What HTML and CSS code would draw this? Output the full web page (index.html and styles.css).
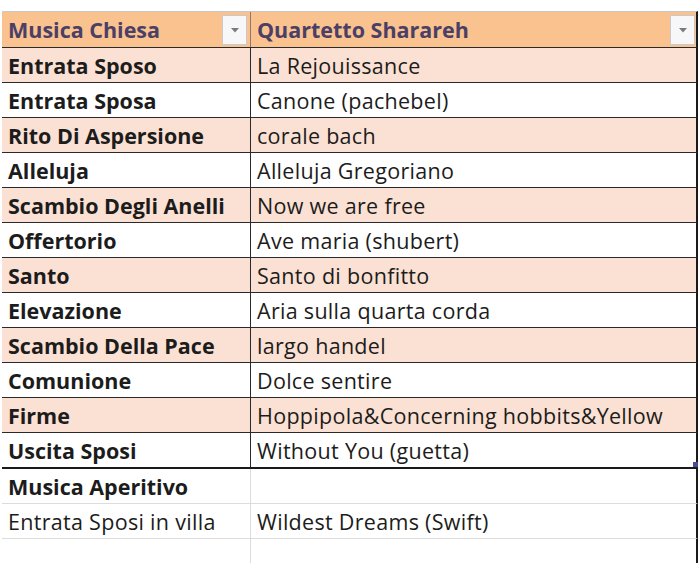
FILE: index.html
```html
<!DOCTYPE html>
<html>
<head>
<meta charset="utf-8">
<link rel="stylesheet" href="styles.css">
</head>
<body>
<div class="sheet">
  <div class="row head">
    <div class="cell c1"><span class="txt">Musica Chiesa</span><span class="dd"><svg width="10" height="6" viewBox="0 0 10 6"><path d="M1 1h8L5 5.5z" fill="#7a7a7a"/></svg></span></div>
    <div class="cell c2"><span class="txt">Quartetto Sharareh</span><span class="dd"><svg width="10" height="6" viewBox="0 0 10 6"><path d="M1 1h8L5 5.5z" fill="#7a7a7a"/></svg></span></div>
  </div>
  <div class="row odd"><div class="cell c1 b">Entrata Sposo</div><div class="cell c2">La Rejouissance</div></div>
  <div class="row even"><div class="cell c1 b">Entrata Sposa</div><div class="cell c2">Canone (pachebel)</div></div>
  <div class="row odd"><div class="cell c1 b">Rito Di Aspersione</div><div class="cell c2">corale bach</div></div>
  <div class="row even"><div class="cell c1 b">Alleluja</div><div class="cell c2">Alleluja Gregoriano</div></div>
  <div class="row odd"><div class="cell c1 b">Scambio Degli Anelli</div><div class="cell c2">Now we are free</div></div>
  <div class="row even"><div class="cell c1 b">Offertorio</div><div class="cell c2">Ave maria (shubert)</div></div>
  <div class="row odd"><div class="cell c1 b">Santo</div><div class="cell c2">Santo di bonfitto</div></div>
  <div class="row even"><div class="cell c1 b">Elevazione</div><div class="cell c2">Aria sulla quarta corda</div></div>
  <div class="row odd"><div class="cell c1 b">Scambio Della Pace</div><div class="cell c2">largo handel</div></div>
  <div class="row even"><div class="cell c1 b">Comunione</div><div class="cell c2">Dolce sentire</div></div>
  <div class="row odd"><div class="cell c1 b">Firme</div><div class="cell c2">Hoppipola&amp;Concerning hobbits&amp;Yellow</div></div>
  <div class="row even last"><div class="cell c1 b">Uscita Sposi</div><div class="cell c2">Without You (guetta)<span class="handle"></span></div></div>
  <div class="row plain"><div class="cell c1 b">Musica Aperitivo</div><div class="cell c2"></div></div>
  <div class="row plain"><div class="cell c1">Entrata Sposi in villa</div><div class="cell c2">Wildest Dreams (Swift)</div></div>
  <div class="row plain"><div class="cell c1"></div><div class="cell c2"></div></div>
</div>
</body>
</html>
```
FILE: styles.css
```css
html, body {
  margin: 0;
  padding: 0;
  background: #ffffff;
  overflow: hidden;
}
.sheet {
  padding-top: 11px;
  padding-left: 2px;
  width: 696px;
  font-family: "Open Sans", "Noto Sans", sans-serif;
  font-size: 21.5px;
  letter-spacing: 0.3px;
  color: #1c1c1c;
}
.row {
  display: grid;
  grid-template-columns: 249px 447px;
  height: 35px;
  box-sizing: border-box;
  border-bottom: 1px solid #2a2a2a;
  border-right: 2px solid #1a1a1a;
}
.head {
  background: #f9c28f;
  border-top: 1px solid #c8c8c8;
  height: 37px;
  color: #4b3f66;
  font-weight: 700;
  letter-spacing: 0;
}
.odd { background: #fbe1d3; }
.even { background: #ffffff; }
.last { border-bottom: 2px solid #1a1a1a; height: 36px; }
.plain {
  background: #ffffff;
  border-bottom: 1px solid #dcdcdc;
}
.cell {
  display: flex;
  align-items: center;
  padding-left: 6px;
  padding-top: 1px;
  white-space: nowrap;
  position: relative;
  line-height: 1;
}
.c1 { border-right: 1px solid #2a2a2a; }
.plain .c1 { border-right: 1px solid #dcdcdc; }
.head .c1 { border-right: 1px solid #8a7a70; }
.b { font-weight: 700; letter-spacing: 0; }
.txt { flex: 1; }
.dd {
  width: 25px;
  height: 30px;
  margin-right: 3px;
  margin-top: -1px;
  background: #f7f7f9;
  border: 1px solid #c9c9c9;
  box-sizing: border-box;
  display: flex;
  align-items: center;
  justify-content: center;
}
.handle {
  position: absolute;
  right: 0;
  bottom: 0;
  width: 5px;
  height: 5px;
  background: #4a4a9a;
}
```
